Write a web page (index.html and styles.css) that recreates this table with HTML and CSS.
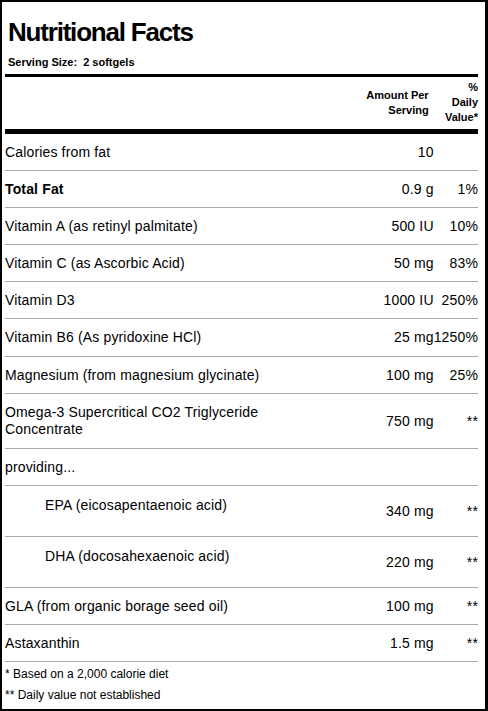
FILE: index.html
```html
<!DOCTYPE html>
<html lang="en">
<head>
    <meta charset="UTF-8">
    <meta name="viewport" content="width=device-width, initial-scale=1.0">
    <title>Nutritional Facts</title>
    <link rel="stylesheet" href="styles.css">
</head>
<body>
<div class="label">
    <div class="label_head">
        <h1>Nutritional Facts</h1>
        <p>Serving Size:&nbsp; 2 softgels</p>
    </div>

    <div class="facts">
        <table>
            <thead>
                <tr>
                    <th class="name"></th>
                    <th class="amount">Amount Per<br>Serving</th>
                    <th class="dv">%<br>Daily<br>Value*</th>
                </tr>
            </thead>
            <tbody>
                <tr>
                    <td class="name">Calories from fat</td>
                    <td class="amount">10</td>
                    <td class="dv"></td>
                </tr>
                <tr>
                    <td class="name"><b>Total Fat</b></td>
                    <td class="amount">0.9 g</td>
                    <td class="dv">1%</td>
                </tr>
                <tr>
                    <td class="name">Vitamin A (as retinyl palmitate)</td>
                    <td class="amount">500 IU</td>
                    <td class="dv">10%</td>
                </tr>
                <tr>
                    <td class="name">Vitamin C (as Ascorbic Acid)</td>
                    <td class="amount">50 mg</td>
                    <td class="dv">83%</td>
                </tr>
                <tr>
                    <td class="name">Vitamin D3</td>
                    <td class="amount">1000 IU</td>
                    <td class="dv">250%</td>
                </tr>
                <tr>
                    <td class="name">Vitamin B6 (As pyridoxine HCl)</td>
                    <td class="amount">25 mg</td>
                    <td class="dv">1250%</td>
                </tr>
                <tr>
                    <td class="name">Magnesium (from magnesium glycinate)</td>
                    <td class="amount">100 mg</td>
                    <td class="dv">25%</td>
                </tr>
                <tr class="tall">
                    <td class="name">Omega-3 Supercritical CO2 Triglyceride<br>Concentrate</td>
                    <td class="amount">750 mg</td>
                    <td class="dv">**</td>
                </tr>
                <tr>
                    <td class="name">providing...</td>
                    <td class="amount"></td>
                    <td class="dv"></td>
                </tr>
                <tr class="sub">
                    <td class="name"><div>EPA (eicosapentaenoic acid)</div></td>
                    <td class="amount">340 mg</td>
                    <td class="dv">**</td>
                </tr>
                <tr class="sub">
                    <td class="name"><div>DHA (docosahexaenoic acid)</div></td>
                    <td class="amount">220 mg</td>
                    <td class="dv">**</td>
                </tr>
                <tr>
                    <td class="name">GLA (from organic borage seed oil)</td>
                    <td class="amount">100 mg</td>
                    <td class="dv">**</td>
                </tr>
                <tr>
                    <td class="name">Astaxanthin</td>
                    <td class="amount">1.5 mg</td>
                    <td class="dv">**</td>
                </tr>
            </tbody>
        </table>

        <div class="notes">
            <p>* Based on a 2,000 calorie diet</p>
            <p>** Daily value not established</p>
        </div>
    </div>
</div>
</body>
</html>
```

FILE: styles.css
```css
body {
    font-family: "Liberation Sans", Arial, sans-serif;
    margin: 0;
    padding: 0;
    background-color: #fff;
    color: #000;
}

.label {
    box-sizing: border-box;
    width: 488px;
    height: 711px;
    border-style: solid;
    border-color: #000;
    border-width: 2px 3px 2px 2px;
    overflow: hidden;
}

.label_head {
    padding: 0 6px;
}

.label_head h1 {
    margin: 15px 0 0 0;
    font-size: 26px;
    line-height: 30px;
    font-weight: bold;
    letter-spacing: -1.2px;
}

.label_head p {
    margin: 8px 0 5px 0;
    font-size: 11px;
    line-height: 14px;
    font-weight: bold;
}

.facts {
    margin: 0 7px 0 3px;
}

.facts table {
    width: 100%;
    border-collapse: separate;
    border-spacing: 0;
    font-size: 14px;
    letter-spacing: 0.15px;
}

.facts th {
    font-size: 11px;
    font-weight: bold;
    line-height: 15px;
    letter-spacing: 0;
    text-align: right;
    vertical-align: middle;
    padding: 3px 0 4px 0;
    border-top: 3px solid #000;
    border-bottom: 5px solid #000;
}

.facts th.amount {
    padding-right: 5px;
}

.facts td {
    line-height: 16.1px;
    padding: 10px 0;
    vertical-align: middle;
    border-bottom: 1px solid #aaa;
}

.facts .name {
    text-align: left;
}

.facts .amount {
    width: 110px;
    text-align: right;
}

.facts .dv {
    width: 44px;
    text-align: right;
}

.facts tr.tall td.name {
    line-height: 17px;
}

.facts tr.sub td.name {
    vertical-align: top;
}

.facts tr.sub td.name div {
    padding: 1px 0 13px 40px;
}

.notes {
    padding-top: 2px;
}

.notes p {
    margin: 0;
    font-size: 12px;
    line-height: 21px;
}
```
